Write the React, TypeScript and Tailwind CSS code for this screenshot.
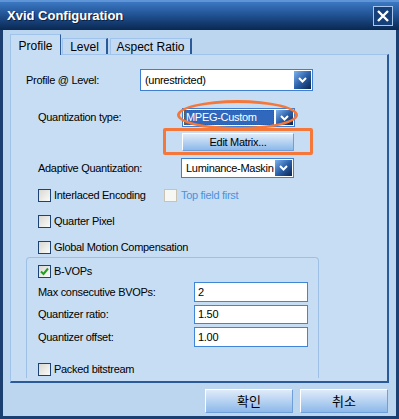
import React from "react";

const FONT = "font-['Tahoma','Liberation_Sans',sans-serif] text-[11px] tracking-[-0.3px]";

function Chevron() {
  return (
    <svg width="9" height="6" viewBox="0 0 9 6">
      <path d="M1 1 L4.5 4.5 L8 1" fill="none" stroke="white" strokeWidth="2" />
    </svg>
  );
}

function Select({
  value,
  width,
  height,
  selected,
}: {
  value: string;
  width: string;
  height: string;
  selected?: boolean;
}) {
  return (
    <div className={`flex ${width} ${height} border border-[#3f7fd0] bg-white`}>
      <div className="flex min-w-0 flex-1 items-center overflow-hidden p-px">
        {selected ? (
          <span className="flex h-full flex-1 items-center whitespace-nowrap border border-dotted border-[#555] bg-[#2f68bd] pl-[1px] text-white">
            {value}
          </span>
        ) : (
          <span className="whitespace-nowrap pl-[3px] text-black">{value}</span>
        )}
      </div>
      <div className="m-px flex w-[17px] items-center justify-center bg-gradient-to-br from-[#7fb2ec] via-[#2c62ab] to-[#0a2652]">
        <Chevron />
      </div>
    </div>
  );
}

function Checkbox({ checked, disabled }: { checked?: boolean; disabled?: boolean }) {
  return (
    <span
      className={`flex h-[13px] w-[13px] shrink-0 items-center justify-center border ${
        disabled
          ? "border-[#cac3b2] bg-[#f7f7f3]"
          : "border-[#1d4274] bg-gradient-to-br from-[#d9d8d2] to-[#fbfbf9]"
      }`}
    >
      {checked && (
        <svg width="9" height="9" viewBox="0 0 9 9">
          <path d="M1 4.5 L3.5 7 L8 1.5" fill="none" stroke="#21a121" strokeWidth="2" />
        </svg>
      )}
    </span>
  );
}

function WinButton({ label, className }: { label: string; className: string }) {
  return (
    <button
      className={`flex items-center justify-center border border-t-white border-l-white border-r-[#6f9fd8] border-b-[#6f9fd8] bg-gradient-to-b from-[#e0ebf8] to-[#8cb9ea] text-black ${className}`}
    >
      {label}
    </button>
  );
}

function TextInput({ value, height }: { value: string; height: string }) {
  return (
    <div className={`flex w-[114px] ${height} items-center border border-[#3f86d6] bg-white pl-[3px] text-black`}>
      {value}
    </div>
  );
}

export default function App() {
  return (
    <div className={`flex h-[419px] w-[399px] flex-col overflow-hidden bg-[#bdd6f0] ${FONT}`}>
      {/* title bar */}
      <div className="flex h-[30px] shrink-0 items-center justify-between border-t-2 border-[#5f95d6] bg-gradient-to-b from-[#3b78c2] via-[#1f4f8f] to-[#0a2852] pl-[7px] pr-[6px]">
        <span className="font-['Liberation_Sans',sans-serif] text-[13px] font-bold tracking-normal text-white [text-shadow:1px_1px_0_#0a1f40]">
          Xvid Configuration
        </span>
        <div className="flex h-[20px] w-[20px] items-center justify-center border border-[#a9c7ec] bg-[#15407a]">
          <svg width="14" height="14" viewBox="0 0 14 14">
            <path d="M2 2 L12 12 M12 2 L2 12" stroke="white" strokeWidth="2.4" />
          </svg>
        </div>
      </div>

      <div className="flex flex-1 flex-col border-x-[3px] border-b-[3px] border-[#1b3f70] px-[7px]">
        {/* tabs */}
        <div className="flex h-[24px] shrink-0 items-end text-[12px] tracking-normal">
          <div className="relative z-10 -mb-px flex h-[21px] w-[51px] items-start justify-center border-l border-t border-r border-l-[#9fc3ea] border-t-[#9fc3ea] border-r-[#2b5a99] bg-[#c7ddf3] pt-[2px]">
            Profile
          </div>
          <div className="ml-px flex h-[16px] w-[46px] items-center justify-center border-l border-t border-r-2 border-l-[#9fc3ea] border-t-[#9fc3ea] border-r-[#2b5a99] bg-[#c3daf2]">
            Level
          </div>
          <div className="ml-[2px] flex h-[16px] w-[82px] items-center justify-center border-l border-t border-r-2 border-l-[#9fc3ea] border-t-[#9fc3ea] border-r-[#2b5a99] bg-[#c3daf2]">
            Aspect Ratio
          </div>
        </div>

        {/* panel */}
        <div className="flex h-[329px] shrink-0 flex-col border-l border-t border-r-2 border-b-2 border-l-[#9fc3ea] border-t-[#9fc3ea] border-r-[#2b5a99] border-b-[#2b5a99] bg-[#c7ddf3]">
          <div className="mt-[14px] flex h-[22px] items-center">
            <span className="w-[129px] pl-[15px]">Profile @ Level:</span>
            <Select value="(unrestricted)" width="w-[173px]" height="h-[22px]" />
          </div>

          <div className="mt-[17px] flex h-[19px] items-center">
            <span className="w-[171px] pl-[27px]">Quantization type:</span>
            <div className="relative">
              <Select value="MPEG-Custom" width="w-[113px]" height="h-[19px]" selected />
              <span className="absolute -left-[5px] -top-[8px] h-[30px] w-[121px] rounded-[50%] border-[3px] border-[#f5783a]" />
            </div>
          </div>

          <div className="mt-[6px] flex h-[18px]">
            <div className="relative ml-[171px]">
              <WinButton label="Edit Matrix..." className="h-[18px] w-[112px]" />
              <span className="absolute -left-[19px] -top-[5px] h-[27px] w-[150px] rounded-[2px] border-[3px] border-[#f5783a]" />
            </div>
          </div>

          <div className="mt-[7px] flex h-[20px] items-center">
            <span className="w-[170px] pl-[27px]">Adaptive Quantization:</span>
            <Select value="Luminance-Masking" width="w-[113px]" height="h-[20px]" />
          </div>

          <div className="mt-[11px] flex h-[13px] items-center pl-[27px]">
            <div className="flex w-[126px] items-center gap-[3px]">
              <Checkbox />
              <span>Interlaced Encoding</span>
            </div>
            <div className="flex items-center gap-[4px]">
              <Checkbox disabled />
              <span className="text-[#4a92dc]">Top field first</span>
            </div>
          </div>

          <div className="mt-[13px] flex h-[13px] items-center gap-[3px] pl-[27px]">
            <Checkbox />
            <span>Quarter Pixel</span>
          </div>

          <div className="mt-[13px] flex h-[13px] items-center gap-[3px] pl-[27px]">
            <Checkbox />
            <span>Global Motion Compensation</span>
          </div>

          {/* B-VOP group */}
          <div className="mb-[3px] ml-[15px] mt-[3px] flex w-[293px] flex-1 flex-col rounded-t-[4px] border-l border-t border-r border-[#9ec0e7]">
            <div className="mt-[7px] flex h-[13px] items-center gap-[3px] pl-[11px]">
              <Checkbox checked />
              <span>B-VOPs</span>
            </div>
            <div className="mt-[4px] flex h-[20px] items-center">
              <span className="w-[167px] pl-[11px]">Max consecutive BVOPs:</span>
              <TextInput value="2" height="h-[20px]" />
            </div>
            <div className="mt-[3px] flex h-[19px] items-center">
              <span className="w-[167px] pl-[11px]">Quantizer ratio:</span>
              <TextInput value="1.50" height="h-[19px]" />
            </div>
            <div className="mt-[3px] flex h-[20px] items-center">
              <span className="w-[167px] pl-[11px]">Quantizer offset:</span>
              <TextInput value="1.00" height="h-[20px]" />
            </div>
            <div className="mt-[16px] flex h-[13px] items-center gap-[3px] pl-[11px]">
              <Checkbox />
              <span>Packed bitstream</span>
            </div>
          </div>
        </div>

        {/* dialog buttons */}
        <div className="flex flex-1 items-start justify-end gap-[7px] pr-px pt-[6px] font-['Noto_Sans_CJK_KR',sans-serif] text-[13px] tracking-normal">
          <WinButton label="확인" className="h-[24px] w-[88px]" />
          <WinButton label="취소" className="h-[24px] w-[88px]" />
        </div>
      </div>
    </div>
  );
}
